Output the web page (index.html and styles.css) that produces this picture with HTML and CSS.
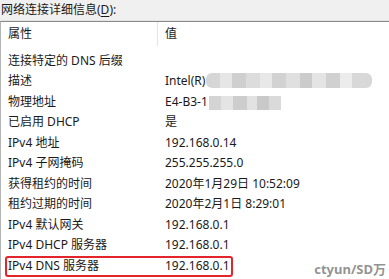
FILE: index.html
```html
<!DOCTYPE html>
<html lang="zh-CN">
<head>
    <meta charset="UTF-8">
    <title>网络连接详细信息</title>
    <link rel="stylesheet" href="styles.css">
</head>
<body>
    <div class="caption">网络连接详细信息(<u>D</u>):</div>
    <div class="listbox">
        <div class="list-header">
            <div class="head-cell">属性</div>
            <div class="head-cell value-col">值</div>
        </div>
        <div class="rows">
            <div class="row"><span>连接特定的 DNS 后缀</span><span></span></div>
            <div class="row"><span>描述</span><span>Intel(R)<i class="mosaic mosaic-long"></i></span></div>
            <div class="row"><span>物理地址</span><span>E4-B3-1<i class="mosaic mosaic-short"></i></span></div>
            <div class="row"><span>已启用 DHCP</span><span>是</span></div>
            <div class="row"><span>IPv4 地址</span><span>192.168.0.14</span></div>
            <div class="row"><span>IPv4 子网掩码</span><span>255.255.255.0</span></div>
            <div class="row"><span>获得租约的时间</span><span>2020年1月29日 10:52:09</span></div>
            <div class="row"><span>租约过期的时间</span><span>2020年2月1日 8:29:01</span></div>
            <div class="row"><span>IPv4 默认网关</span><span>192.168.0.1</span></div>
            <div class="row"><span>IPv4 DHCP 服务器</span><span>192.168.0.1</span></div>
            <div class="row highlight"><span>IPv4 DNS 服务器</span><span>192.168.0.1</span></div>
        </div>
    </div>
    <div class="watermark">ctyun/SD万</div>
</body>
</html>
```

FILE: styles.css
```css
body {
    margin: 0;
    height: 279px;
    overflow: hidden;
    position: relative;
    background-color: #f0f0f0;
    font-family: "Noto Sans", "Noto Sans CJK SC", sans-serif;
    font-size: 12px;
    color: #1a1a1a;
}
.caption {
    height: 21px;
    line-height: 20px;
    padding-left: 1px;
    border-bottom: 1px solid #e4e4e4;
    box-sizing: border-box;
}
.caption u {
    text-underline-offset: 2px;
}
.listbox {
    border-top: 1px solid #8a8a8a;
    border-left: 1px solid #b4b4b4;
    margin-top: 0;
    background-color: #fff;
    height: 258px;
    box-sizing: border-box;
}
.list-header {
    display: grid;
    grid-template-columns: 156px 1fr;
    height: 24px;
}
.head-cell {
    line-height: 24px;
    padding-left: 7px;
}
.value-col {
    border-left: 1px solid #e3e3e3;
}
.rows {
    padding-top: 4.5px;
}
.row {
    display: grid;
    grid-template-columns: 157px 1fr;
    height: 20.5px;
    line-height: 20.5px;
    white-space: nowrap;
}
.row span {
    padding-left: 7px;
}
.mosaic {
    display: inline-block;
    height: 15px;
    vertical-align: -3px;
    margin-left: 1px;
    border-radius: 6px;
}
.mosaic-long {
    width: 166px;
    background: linear-gradient(to right,
        #d6d6d6 0 14px, #e6e6e6 14px 26px, #cfcfcf 26px 40px, #dcdcdc 40px 54px,
        #e8e8e8 54px 66px, #d2d2d2 66px 80px, #e0e0e0 80px 94px, #cbcbcb 94px 106px,
        #e4e4e4 106px 120px, #d0d0d0 120px 134px, #ececec 134px 146px, #d8d8d8 146px 166px);
}
.mosaic-short {
    width: 72px;
    height: 14px;
    vertical-align: -4px;
    border-radius: 0;
    background: linear-gradient(to right,
        #d4d4d4 0 12px, #e4e4e4 12px 24px, #cdcdcd 24px 38px, #e2e2e2 38px 48px,
        #c9c9c9 48px 60px, #dadada 60px 72px);
}
.highlight {
    position: relative;
}
.highlight::after {
    content: "";
    position: absolute;
    left: 4px;
    top: 0;
    width: 228px;
    height: 21px;
    border: 2px solid #e3242b;
    border-radius: 3px;
    box-sizing: border-box;
}
.watermark {
    position: absolute;
    right: 3px;
    bottom: 1px;
    font-family: "Noto Sans", "Noto Sans CJK SC", sans-serif;
    font-size: 13px;
    font-weight: bold;
    color: rgba(110, 110, 110, 0.75);
}
```
